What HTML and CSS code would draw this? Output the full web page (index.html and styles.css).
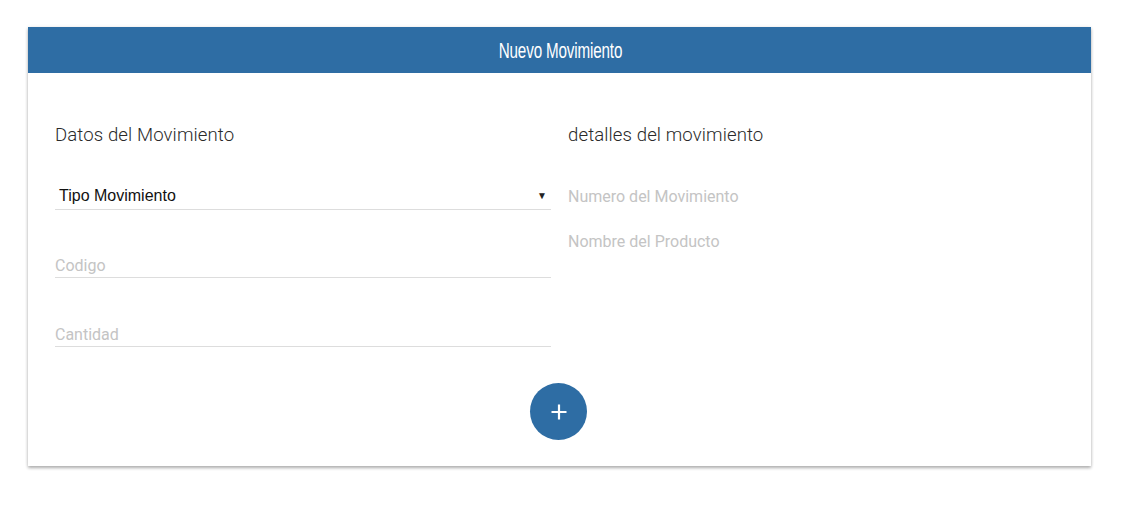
FILE: index.html
```html
<!DOCTYPE html>
<html lang="es">
<head>
<meta charset="utf-8">
<title>Nuevo Movimiento</title>
<link rel="stylesheet" href="styles.css">
</head>
<body>
<div class="page">
  <section class="card">
    <header class="card-header"><span class="card-title">Nuevo Movimiento</span></header>
    <div class="card-body">
      <div class="columns">
        <div class="col">
          <h2 class="col-title">Datos del Movimiento</h2>
          <div class="field select-field">
            <span class="select-value">Tipo Movimiento</span>
            <span class="caret">&#9660;</span>
          </div>
          <div class="field input-field"><span class="placeholder">Codigo</span></div>
          <div class="field input-field"><span class="placeholder">Cantidad</span></div>
        </div>
        <div class="col">
          <h2 class="col-title">detalles del movimiento</h2>
          <p class="detail first">Numero del Movimiento</p>
          <p class="detail">Nombre del Producto</p>
        </div>
      </div>
      <div class="actions">
        <button class="fab" type="button" aria-label="Agregar">
          <svg width="18" height="18" viewBox="0 0 18 18"><path d="M9 1.5v15M1.5 9h15" stroke="#fff" stroke-width="2.2"/></svg>
        </button>
      </div>
    </div>
  </section>
</div>
</body>
</html>
```

FILE: styles.css
```css
* { box-sizing: border-box; }
html, body { margin: 0; padding: 0; background: #fff; }
body { font-family: Roboto, "Liberation Sans", sans-serif; }
.page { padding: 27px 33px 40px 28px; }
.card {
  width: 1063px;
  height: 439px;
  background: #fff;
  box-shadow: 0 2px 3px rgba(0,0,0,0.3), 0 0 4px rgba(0,0,0,0.07);
}
.card-header {
  height: 46px;
  padding-top: 2px;
  background: #2e6da4;
  color: #fff;
  display: flex;
  align-items: center;
  justify-content: center;
}
.card-title {
  font-family: "Liberation Sans", Arial, sans-serif;
  font-size: 22px;
  display: inline-block;
  transform: scaleX(0.69);
  letter-spacing: -0.2px;
  margin-left: 1px;
}
.card-body { padding: 48px 27px 0 27px; }
.columns { display: flex; gap: 17px; }
.col { width: 496px; }
.col-title {
  margin: 0;
  font-weight: 300;
  font-size: 18.6px;
  color: #2a2a2a;
  height: 28px;
  line-height: 28px;
  letter-spacing: 0.1px;
}
.field { border-bottom: 1px solid #ddd; height: 32px; display: flex; align-items: flex-end; }
.select-field {
  margin-top: 29px;
  justify-content: space-between;
  padding: 0 4px 4px 4px;
}
.select-value { font-family: "Liberation Sans", Arial, sans-serif; font-size: 16px; color: #111; }
.caret { font-size: 10px; color: #222; padding-bottom: 4px; }
.input-field { margin-top: 36px; padding-bottom: 2px; }
.input-field + .input-field { margin-top: 37px; }
.placeholder { font-size: 16px; color: #c4c4c4; }
.detail { margin: 0; font-size: 16px; color: #c4c4c4; line-height: 20px; }
.detail.first { margin-top: 38px; }
.detail + .detail { margin-top: 25px; }
.actions { display: flex; justify-content: center; margin-top: 36px; }
.fab {
  width: 57px; height: 57px; border-radius: 50%;
  background: #2e6da4; border: 0; padding: 0;
  display: flex; align-items: center; justify-content: center;
  margin-right: 2px;
}
```
